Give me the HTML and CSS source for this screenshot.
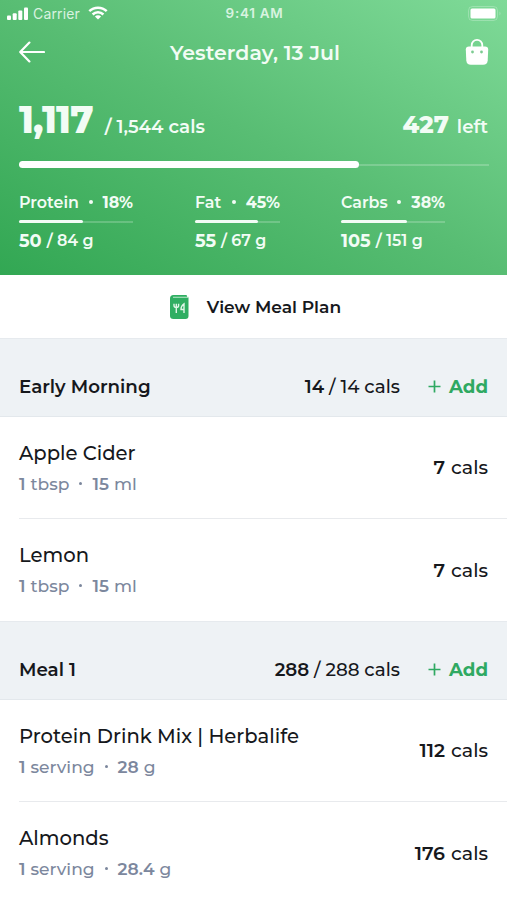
FILE: index.html
```html
<!DOCTYPE html>
<html lang="en">
<head>
  <meta charset="UTF-8" />
  <meta name="viewport" content="width=device-width, initial-scale=1" />
  <title>Food Diary</title>
  <link rel="stylesheet" href="styles.css">
</head>
<body>

  <header class="summary">
    <div class="status-bar">
      <div class="carrier">
        <svg width="22" height="13" viewBox="0 0 22 13" fill="#fff">
          <rect x="0" y="8.5" width="4" height="4.5" rx="1" />
          <rect x="5.7" y="6.3" width="4" height="6.7" rx="1" />
          <rect x="11.3" y="3.5" width="4" height="9.5" rx="1" />
          <rect x="17" y="0.5" width="4" height="12.5" rx="1" />
        </svg>
        <span class="carrier-name">Carrier</span>
        <svg width="20" height="14" viewBox="0 0 20 14" fill="none" stroke="#fff" stroke-width="2.5">
          <path d="M1.3 5.2a12.4 12.4 0 0 1 17.4 0" />
          <path d="M4.6 8.5a7.7 7.7 0 0 1 10.8 0" />
          <path d="M10 13.5L6.9 10.6a4.4 4.4 0 0 1 6.2 0z" fill="#fff" stroke="none" />
        </svg>
      </div>
      <span class="time">9:41 AM</span>
      <svg class="battery" width="34" height="15" viewBox="0 0 34 15">
        <rect x="0.5" y="0.5" width="29" height="14" rx="4" fill="none" stroke="#fff" stroke-opacity="0.25" />
        <rect x="2.5" y="2.5" width="25" height="10" rx="1.5" fill="#fff" />
        <path d="M31.5 5.5q2 2 0 4z" fill="#fff" opacity="0.3" />
      </svg>
    </div>

    <div class="nav">
      <svg width="26" height="22" viewBox="0 0 26 22" fill="none" stroke="#fff" stroke-width="2.2" stroke-linecap="round" stroke-linejoin="round">
        <path d="M25 11H1.2M10.4 1.6L1.2 11l9.2 9.4" />
      </svg>
      <h1 class="title">Yesterday, 13 Jul</h1>
      <svg width="24" height="26" viewBox="0 0 24 26">
        <path d="M6.7 9V6.2a5.2 5.2 0 0 1 10.6 0V9" fill="none" stroke="#fff" stroke-width="1.8" />
        <path d="M4 7.5h16q3.2 0 3.2 3l-.5 11q-.4 4.300-4.600 4.300H5.900q-4.200 0-4.600-4.300l-.5-11q0-3 3.200-3z" fill="#fff" />
        <circle cx="7.5" cy="13" r="1.4" fill="#7ccb91" />
        <circle cx="16.5" cy="13" r="1.4" fill="#7ccb91" />
      </svg>
    </div>

    <div class="calories">
      <div class="eaten"><b>1,117</b><span>/ 1,544 cals</span></div>
      <div class="left"><b>427</b><span>left</span></div>
    </div>
    <div class="progress"><div class="progress-fill" style="width: 340px"></div></div>

    <div class="macros">
      <div class="macro protein">
        <div class="macro-label"><span>Protein</span><i class="dot"></i><b>18%</b></div>
        <div class="bar"><div class="bar-fill" style="width: 64px"></div></div>
        <div class="macro-value"><b>50</b><span>/ 84 g</span></div>
      </div>
      <div class="macro fat">
        <div class="macro-label"><span>Fat</span><i class="dot"></i><b>45%</b></div>
        <div class="bar"><div class="bar-fill" style="width: 63px"></div></div>
        <div class="macro-value"><b>55</b><span>/ 67 g</span></div>
      </div>
      <div class="macro carbs">
        <div class="macro-label"><span>Carbs</span><i class="dot"></i><b>38%</b></div>
        <div class="bar"><div class="bar-fill" style="width: 66px"></div></div>
        <div class="macro-value"><b>105</b><span>/ 151 g</span></div>
      </div>
    </div>
  </header>

  <div class="plan">
    <svg width="19" height="24" viewBox="0 0 19 24">
      <path d="M3.5 0H16q1 0 1 1v1.500h1.500V21q0 3-3 3h-12Q0 24 0 21V3.500Q0 0 3.500 0z" fill="#2fae62" />
      <path d="M3 2.300h15.500" stroke="#a5dfba" stroke-width="1.200" />
      <path d="M4 8.800v1.700q0 2 2.300 2t2.300-2V8.800M6.300 8.800V18M14 18V8.800q-3 2-3 5.700h3" fill="none" stroke="#dff5e7" stroke-width="1.400" />
    </svg>
    <span>View Meal Plan</span>
  </div>

  <section>
    <div class="section-head">
      <h2>Early Morning</h2>
      <div class="total"><b>14</b> <span>/ 14 cals</span></div>
      <div class="add">
        <svg width="13" height="13" viewBox="0 0 13 13" stroke="#2fa962" stroke-width="1.7"><path d="M6.5 .5v12M.5 6.500h12" /></svg>
        <span>Add</span>
      </div>
    </div>
    <div class="item">
      <div>
        <div class="name">Apple Cider</div>
        <div class="amount"><b>1</b><span>tbsp</span><i class="dot"></i><b>15</b><span>ml</span></div>
      </div>
      <div class="cals"><b>7</b><span>cals</span></div>
    </div>
    <div class="item">
      <div>
        <div class="name">Lemon</div>
        <div class="amount"><b>1</b><span>tbsp</span><i class="dot"></i><b>15</b><span>ml</span></div>
      </div>
      <div class="cals"><b>7</b><span>cals</span></div>
    </div>
  </section>

  <section>
    <div class="section-head">
      <h2>Meal 1</h2>
      <div class="total"><b>288</b> <span>/ 288 cals</span></div>
      <div class="add">
        <svg width="13" height="13" viewBox="0 0 13 13" stroke="#2fa962" stroke-width="1.7"><path d="M6.5 .5v12M.5 6.500h12" /></svg>
        <span>Add</span>
      </div>
    </div>
    <div class="item">
      <div>
        <div class="name">Protein Drink Mix | Herbalife</div>
        <div class="amount"><b>1</b><span>serving</span><i class="dot"></i><b>28</b><span>g</span></div>
      </div>
      <div class="cals"><b>112</b><span>cals</span></div>
    </div>
    <div class="item">
      <div>
        <div class="name">Almonds</div>
        <div class="amount"><b>1</b><span>serving</span><i class="dot"></i><b>28.4</b><span>g</span></div>
      </div>
      <div class="cals"><b>176</b><span>cals</span></div>
    </div>
  </section>

</body>
</html>
```

FILE: styles.css
```css
* {
  box-sizing: border-box;
}

body {
  margin: 0;
  width: 507px;
  height: 900px;
  overflow: hidden;
  font-family: Montserrat, Inter, sans-serif;
  font-weight: 500;
  color: #16181c;
  background: #fff;
  white-space: nowrap;
}

h1, h2 {
  margin: 0;
}

b {
  font-weight: 600;
}

/* green header */
.summary {
  height: 275px;
  color: #f2fcf5;
  background: linear-gradient(to top right, #32a753, #58bd73 50%, #7fda98);
}

.status-bar {
  display: grid;
  grid-template-columns: 1fr auto 1fr;
  align-items: center;
  height: 26px;
  padding: 0 5px 0 7px;
  font-family: Inter, sans-serif;
  color: #d9f3e0;
}

.carrier {
  display: flex;
  align-items: center;
}

.carrier-name {
  margin: 0 8px 0 4px;
  font-size: 14px;
  font-weight: 400;
  letter-spacing: 0.15px;
}

.time {
  font-size: 13.5px;
  font-weight: 600;
  letter-spacing: 0.7px;
}

.battery {
  justify-self: end;
}

.nav {
  display: flex;
  align-items: center;
  justify-content: space-between;
  height: 52px;
  padding: 0 18px 0 19px;
}

.title {
  font-size: 20.5px;
  font-weight: 600;
  letter-spacing: 0.05px;
}

.calories {
  display: flex;
  justify-content: space-between;
  align-items: baseline;
  height: 83px;
  padding: 20px 19px 0;
  line-height: 44px;
  font-size: 18.3px;
  font-weight: 600;
}

.eaten b {
  font-size: 37px;
  font-weight: 800;
  letter-spacing: -0.9px;
  margin-right: 12px;
}

.left b {
  font-size: 24px;
  font-weight: 800;
  margin-right: 8px;
}

.progress {
  display: flex;
  align-items: center;
  height: 7px;
  margin: 0 18px 0 19px;
  background: linear-gradient(#ffffff33, #ffffff33) center / 100% 2px no-repeat;
}

.progress-fill {
  height: 7px;
  border-radius: 4px;
  background: #fff;
}

.macros {
  display: grid;
  grid-template-columns: 176px 146px 104px;
  padding: 24px 19px 0;
  font-size: 15.9px;
  font-weight: 600;
}

.macros b {
  font-weight: 700;
}

.macro-label, .macro-value {
  display: flex;
  align-items: center;
  height: 20px;
}

.macro-label {
  justify-content: space-between;
}

.protein .macro-label, .protein .bar {
  width: 114px;
}

.fat .macro-label, .fat .bar {
  width: 85px;
}

.carbs .macro-label, .carbs .bar {
  width: 104px;
}

.dot {
  width: 4px;
  height: 4px;
  border-radius: 2px;
  background: currentColor;
}

.bar {
  height: 3px;
  margin: 8px 0 7px;
  background: linear-gradient(#ffffff33, #ffffff33) center / 100% 2px no-repeat;
}

.bar-fill {
  height: 3px;
  border-radius: 2px;
  background: #f2fcf5;
}

.macro-value b {
  font-size: 17.8px;
  margin-right: 5px;
}

/* meal plan link */
.plan {
  display: flex;
  align-items: center;
  justify-content: center;
  gap: 18px;
  height: 63px;
  padding-left: 4px;
  font-size: 17.1px;
  font-weight: 600;
}

/* meals */
.section-head {
  display: flex;
  align-items: center;
  height: 79px;
  padding: 18px 19px 0;
  background: #eef2f5;
  border-top: 1px solid #e6eaee;
  border-bottom: 1px solid #e3e8ec;
}

.section-head h2 {
  flex: 1;
  font-size: 18.3px;
  font-weight: 600;
}

.total {
  margin-right: 28px;
  font-size: 18.3px;
}

.add {
  display: flex;
  align-items: center;
  gap: 8px;
  font-size: 18.2px;
  font-weight: 700;
  color: #2fa962;
}

.item {
  display: flex;
  justify-content: space-between;
  align-items: center;
  height: 101px;
  margin-left: 19px;
  padding-right: 19px;
}

.item + .item {
  height: 103px;
  border-top: 1px solid #e8eaed;
}

.name {
  height: 30px;
  line-height: 31px;
  font-size: 19.6px;
}

.amount {
  display: flex;
  align-items: center;
  height: 30px;
  padding-top: 1px;
  font-size: 17.1px;
  color: #7c879d;
}

.amount .dot {
  width: 3px;
  height: 3px;
  margin: 0 10px;
}

.amount b {
  margin-right: 5px;
}

.cals {
  font-size: 19px;
}

.cals b {
  margin-right: 6px;
}
```
